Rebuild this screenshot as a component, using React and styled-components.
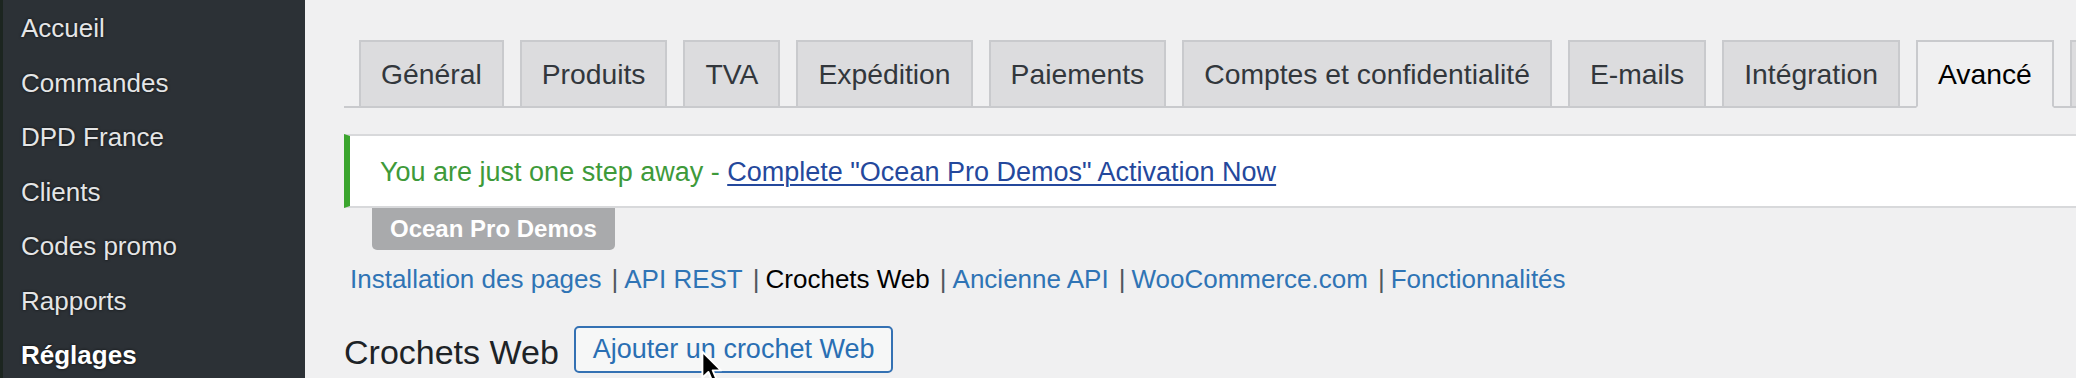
import React from "react";
import styled, { createGlobalStyle } from "styled-components";

const Global = createGlobalStyle`
  html, body {
    margin: 0;
    padding: 0;
    width: 2076px;
    height: 378px;
    overflow: hidden;
    background: #f0f0f1;
  }
  body {
    font-family: "Liberation Sans", Arial, sans-serif;
  }
  * { box-sizing: border-box; }
`;

const Layout = styled.div`
  position: relative;
  display: flex;
  width: 2076px;
  height: 378px;
  overflow: hidden;
  background: #f0f0f1;
`;

const Sidebar = styled.nav`
  width: 305px;
  flex-shrink: 0;
  background: #2c3136;
  border-left: 3px solid #1c2520;
  padding-top: 1px;
`;

const MenuItem = styled.div`
  height: 54.5px;
  line-height: 54.5px;
  padding-left: 18px;
  font-size: 26px;
  white-space: nowrap;
  color: ${(p) => (p.$active ? "#ffffff" : "#e4e5e6")};
  font-weight: ${(p) => (p.$active ? 700 : 400)};
  text-shadow: 0 0 3px rgba(0, 0, 0, 0.75);
`;

const Main = styled.main`
  flex: 1;
  min-width: 0;
  display: flex;
  flex-direction: column;
  padding: 40px 0 0 39px;
  overflow: hidden;
`;

const TabBar = styled.div`
  display: flex;
  gap: 16px;
  padding-left: 15px;
  border-bottom: 2px solid #c9cacd;
`;

const Tab = styled.div`
  flex-shrink: 0;
  display: flex;
  align-items: center;
  height: 68px;
  min-width: 40px;
  margin-bottom: -2px;
  padding: 0 20px;
  font-size: 28.3px;
  white-space: nowrap;
  color: ${(p) => (p.$active ? "#000" : "#32373c")};
  background: ${(p) => (p.$active ? "#f0f0f1" : "#dcdcde")};
  border: 2px solid #c9cacd;
  border-bottom-color: ${(p) => (p.$active ? "#f0f0f1" : "#c9cacd")};
`;

const Notice = styled.div`
  margin-top: 26px;
  height: 74px;
  display: flex;
  align-items: center;
  padding: 2px 0 0 30px;
  background: #fff;
  border-left: 6px solid #3ba52e;
  border-top: 2px solid #d8d9db;
  border-bottom: 2px solid #d8d9db;
  font-size: 27px;
  color: #3e9a3a;
  white-space: nowrap;
`;

const NoticeLink = styled.a`
  color: #24489c;
  text-decoration: underline;
  text-underline-offset: 3px;
  text-decoration-thickness: 2px;
`;

const OceanButton = styled.div`
  align-self: flex-start;
  margin-left: 28px;
  height: 42px;
  display: flex;
  align-items: center;
  padding: 0 18px;
  background: #a9aaac;
  color: #fff;
  font-weight: 700;
  font-size: 24px;
  border-radius: 0 0 5px 5px;
`;

const SubNav = styled.ul`
  list-style: none;
  margin: 11px 0 0 6px;
  padding: 0;
  display: flex;
  font-size: 26px;
  line-height: 36px;
  white-space: nowrap;
`;

const SubItem = styled.li`
  display: flex;
`;

const SubLink = styled.a`
  color: ${(p) => (p.$current ? "#000" : "#2f74b5")};
  text-decoration: none;
`;

const Sep = styled.span`
  color: #50575e;
  margin: 0 6px 0 10px;
`;

const HeadingRow = styled.div`
  display: flex;
  align-items: center;
  gap: 15px;
  margin-top: 29px;
`;

const Heading = styled.h2`
  margin: 0;
  font-size: 34px;
  font-weight: 400;
  color: #1d2327;
  line-height: 1;
  padding-top: 4px;
`;

const OutlineButton = styled.button`
  height: 47px;
  padding: 0 17px;
  font-family: "Liberation Sans", Arial, sans-serif;
  font-size: 27px;
  color: #2a6fb3;
  background: #f6f7f7;
  border: 2px solid #3471b3;
  border-radius: 5px;
`;

const Cursor = styled.svg`
  position: absolute;
  left: 700px;
  top: 350px;
  width: 24px;
  height: 36px;
`;

const menu = ["Accueil", "Commandes", "DPD France", "Clients", "Codes promo", "Rapports", "Réglages"];
const tabs = [
  "Général",
  "Produits",
  "TVA",
  "Expédition",
  "Paiements",
  "Comptes et confidentialité",
  "E-mails",
  "Intégration",
  "Avancé",
];
const subs = [
  "Installation des pages",
  "API REST",
  "Crochets Web",
  "Ancienne API",
  "WooCommerce.com",
  "Fonctionnalités",
];

export default function App() {
  return (
    <Layout>
      <Global />
      <Sidebar>
        {menu.map((m) => (
          <MenuItem key={m} $active={m === "Réglages"}>
            {m}
          </MenuItem>
        ))}
      </Sidebar>
      <Main>
        <TabBar>
          {tabs.map((t) => (
            <Tab key={t} $active={t === "Avancé"}>
              {t}
            </Tab>
          ))}
          <Tab aria-hidden="true" />
        </TabBar>
        <Notice>
          You are just one step away -&nbsp;
          <NoticeLink>Complete "Ocean Pro Demos" Activation Now</NoticeLink>
        </Notice>
        <OceanButton>Ocean Pro Demos</OceanButton>
        <SubNav>
          {subs.map((s, i) => (
            <SubItem key={s}>
              <SubLink $current={s === "Crochets Web"}>{s}</SubLink>
              {i < subs.length - 1 && <Sep>|</Sep>}
            </SubItem>
          ))}
        </SubNav>
        <HeadingRow>
          <Heading>Crochets Web</Heading>
          <OutlineButton>Ajouter un crochet Web</OutlineButton>
        </HeadingRow>
      </Main>
      <Cursor viewBox="0 0 20 30">
        <path
          d="M2 1.5 L2 23 L7 18.3 L10.5 26.5 L14 25 L10.6 17 L17.5 17 Z"
          fill="#000"
          stroke="#fff"
          strokeWidth="1.6"
          strokeLinejoin="round"
        />
      </Cursor>
    </Layout>
  );
}
